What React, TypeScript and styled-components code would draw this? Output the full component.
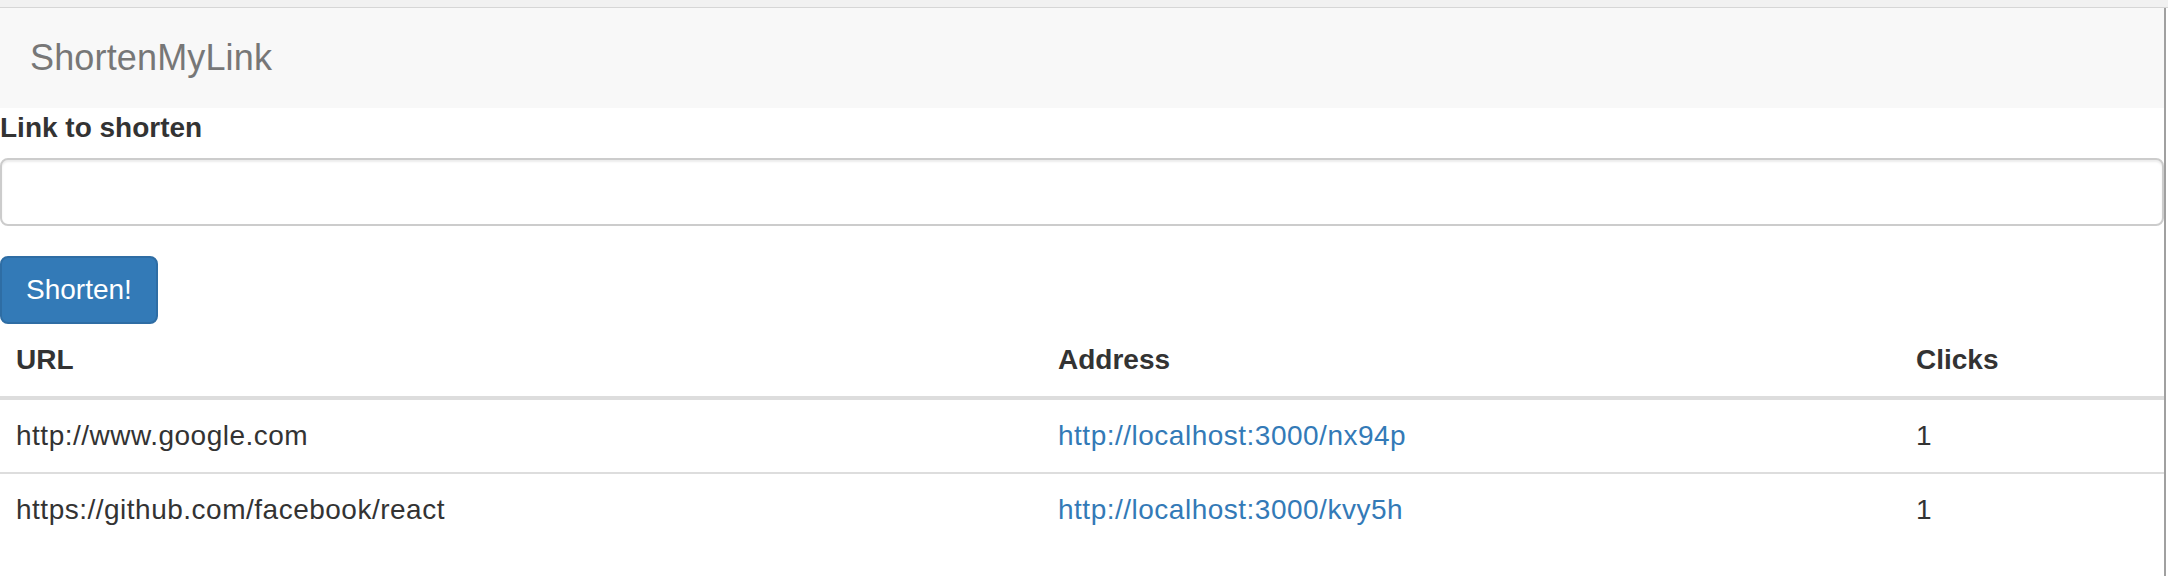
import React from "react";
import styled, { createGlobalStyle } from "styled-components";

const GlobalStyle = createGlobalStyle`
  * { box-sizing: border-box; }
  html, body { margin: 0; padding: 0; background: #fff; }
  body {
    font-family: "Liberation Sans", Arial, Helvetica, sans-serif;
    font-size: 28px;
    line-height: 40px;
    color: #333;
  }
`;

const TopStrip = styled.div`
  height: 8px;
  background: #f1f1f1;
  border-bottom: 1px solid #d6d6d6;
`;

const Frame = styled.div`
  display: flex;
  align-items: stretch;
`;

const Main = styled.div`
  width: 2164px;
  flex: none;
`;

const ScrollEdge = styled.div`
  width: 2px;
  flex: none;
  background: #a0a0a0;
`;

const Navbar = styled.nav`
  height: 100px;
  background: #f8f8f8;
  display: flex;
  align-items: center;
`;

const Brand = styled.a`
  padding: 30px;
  font-size: 36px;
  line-height: 40px;
  color: #777;
  text-decoration: none;
  letter-spacing: 0.15px;
`;

const FormGroup = styled.div`
  margin-bottom: 30px;
`;

const Label = styled.label`
  display: inline-block;
  font-weight: bold;
  margin-bottom: 10px;
`;

const Input = styled.input`
  display: block;
  width: 100%;
  height: 68px;
  padding: 12px 24px;
  font: inherit;
  color: #555;
  background: #fff;
  border: 2px solid #ccc;
  border-radius: 8px;
  box-shadow: inset 0 2px 2px rgba(0, 0, 0, 0.075);
  outline: none;
`;

const Button = styled.button`
  display: block;
  height: 68px;
  padding: 12px 24px;
  font: inherit;
  color: #fff;
  background: #337ab7;
  border: 2px solid #2e6da4;
  border-radius: 8px;
  cursor: pointer;
`;

const Table = styled.table`
  width: 100%;
  border-collapse: collapse;
  table-layout: fixed;
  margin-bottom: 40px;
`;

const Th = styled.th`
  text-align: left;
  font-weight: bold;
  padding: 16px;
  line-height: 40px;
  border-bottom: 4px solid #ddd;
`;

const Td = styled.td`
  padding: 16px;
  line-height: 40px;
  border-top: 2px solid #ddd;
  white-space: nowrap;
  letter-spacing: 0.5px;
`;

const Link = styled.a`
  color: #337ab7;
  text-decoration: none;
`;

const rows = [
  { url: "http://www.google.com", address: "http://localhost:3000/nx94p", clicks: 1 },
  { url: "https://github.com/facebook/react", address: "http://localhost:3000/kvy5h", clicks: 1 },
];

export default function App() {
  return (
    <>
      <GlobalStyle />
      <TopStrip />
      <Frame>
        <Main>
          <Navbar>
            <Brand href="#">ShortenMyLink</Brand>
          </Navbar>
          <form onSubmit={(e) => e.preventDefault()}>
            <FormGroup>
              <Label>Link to shorten</Label>
              <Input type="text" />
            </FormGroup>
            <Button type="submit">Shorten!</Button>
          </form>
          <Table>
            <colgroup>
              <col style={{ width: "1042px" }} />
              <col style={{ width: "858px" }} />
              <col />
            </colgroup>
            <thead>
              <tr>
                <Th>URL</Th>
                <Th>Address</Th>
                <Th>Clicks</Th>
              </tr>
            </thead>
            <tbody>
              {rows.map((r) => (
                <tr key={r.address}>
                  <Td>{r.url}</Td>
                  <Td>
                    <Link href="#">{r.address}</Link>
                  </Td>
                  <Td>{r.clicks}</Td>
                </tr>
              ))}
            </tbody>
          </Table>
        </Main>
        <ScrollEdge />
      </Frame>
    </>
  );
}
